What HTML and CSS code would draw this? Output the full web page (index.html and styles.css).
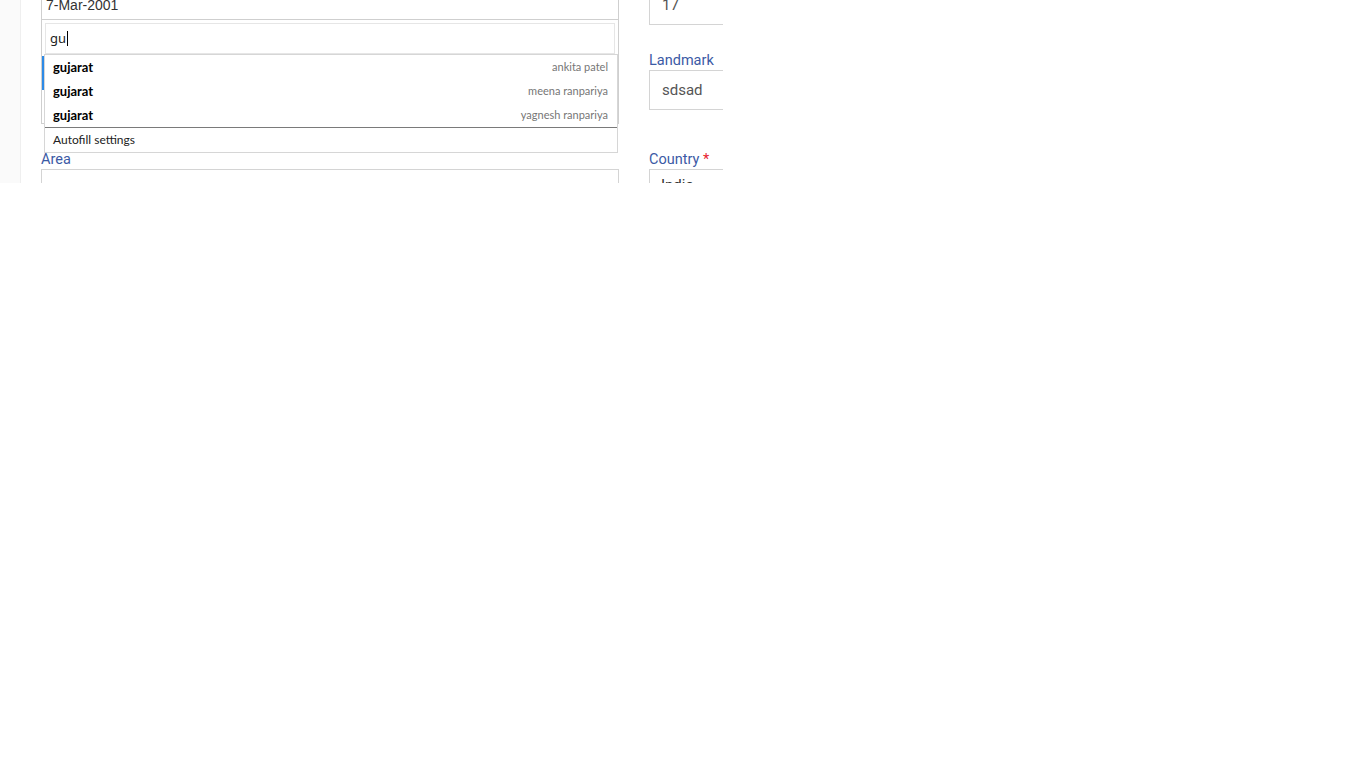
FILE: index.html
```html
<!DOCTYPE html>
<html lang="en">
<head>
    <meta charset="UTF-8">
    <meta name="viewport" content="width=device-width, initial-scale=1.0">
    <title>Address Details</title>
    <link rel="stylesheet" href="styles.css">
</head>
<body>

    <div class="viewport">
        <aside class="sidebar"></aside>

        <main class="content">
            <form class="profile-form" autocomplete="on">

                <!-- Date of birth (dropdown open) -->
                <div class="field">
                    <label class="field-label">Date of Birth</label>
                    <div class="select-wrap">
                        <div class="select-box dob">7-Mar-2001</div>

                        <div class="select-dropdown">
                            <div class="select-search">gu<span class="caret"></span></div>
                        </div>

                        <span class="focus-bar left"></span>
                        <span class="focus-bar right"></span>

                        <!-- browser autofill suggestions -->
                        <div class="autofill-popup">
                            <div class="autofill-item">
                                <span class="autofill-value">gujarat</span>
                                <span class="autofill-label">ankita patel</span>
                            </div>
                            <div class="autofill-item">
                                <span class="autofill-value">gujarat</span>
                                <span class="autofill-label">meena ranpariya</span>
                            </div>
                            <div class="autofill-item">
                                <span class="autofill-value">gujarat</span>
                                <span class="autofill-label">yagnesh ranpariya</span>
                            </div>
                            <div class="autofill-settings">Autofill settings</div>
                        </div>
                    </div>
                </div>

                <div class="field">
                    <label class="field-label">House No</label>
                    <input class="text-input" type="text" value="17">
                </div>

                <div class="field">
                    <label class="field-label">State</label>
                    <div class="select-box"></div>
                </div>

                <div class="field with-hint">
                    <label class="field-label">Landmark</label>
                    <input class="text-input" type="text" value="sdsad">
                </div>

                <div class="field">
                    <label class="field-label">Area</label>
                    <input class="text-input" type="text" value="">
                </div>

                <div class="field">
                    <label class="field-label">Country <span class="required">*</span></label>
                    <div class="select-box country">India</div>
                </div>

            </form>
        </main>
    </div>

</body>
</html>
```

FILE: styles.css
```css
body {
    margin: 0;
    background: #fff;
    font-family: Roboto, Arial, sans-serif;
}
.viewport {
    width: 723px;
    height: 183px;
    overflow: hidden;
    display: flex;
}
.sidebar {
    flex: 0 0 20px;
    background-color: #fafafa;
    border-right: 1px solid #efefef;
}
.content {
    flex: 1;
    padding-left: 20px;
}
.profile-form {
    display: grid;
    grid-template-columns: 578px 578px;
    column-gap: 30px;
    row-gap: 24px;
    align-items: start;
    margin-top: -36px;
}
.field {
    display: flex;
    flex-direction: column;
}
.field.with-hint {
    padding-bottom: 14px;
}
.field-label {
    display: block;
    font-size: 14.5px;
    line-height: 20px;
    padding-top: 2px;
    margin-bottom: -1px;
    color: #3b5aa5;
}
.required {
    color: #e8222e;
}
.text-input {
    box-sizing: border-box;
    height: 40px;
    margin: 0;
    padding: 0 12px;
    border: 1px solid #d4d4d4;
    border-radius: 0;
    font-family: Roboto, Arial, sans-serif;
    font-size: 15px;
    color: #555;
    background: #fff;
    outline: none;
}
.select-box {
    box-sizing: border-box;
    height: 40px;
    border: 1px solid #d4d4d4;
    background: #fff;
}
.select-box.dob {
    height: 35px;
    padding: 11px 0 0 4px;
    font-family: "Liberation Sans", Arial, sans-serif;
    font-size: 14px;
    line-height: 16px;
    color: #333;
    border-color: #cfcfcf;
}
.select-box.country {
    padding: 6px 0 0 11px;
    font-size: 15px;
    line-height: 18px;
    color: #333;
}
.select-wrap {
    position: relative;
}

/* open dropdown under the date box */
.select-dropdown {
    position: absolute;
    top: 35px;
    left: 0;
    box-sizing: border-box;
    width: 578px;
    height: 104px;
    padding: 3px 3px 0 3px;
    border: 1px solid #cfcfcf;
    border-top: none;
    background: #fff;
}
.select-search {
    box-sizing: border-box;
    height: 31px;
    padding: 0 0 0 4px;
    border: 1px solid #e6e6e6;
    font-family: "Noto Sans", "Open Sans", sans-serif;
    font-size: 13px;
    line-height: 28px;
    color: #222;
}
.caret {
    display: inline-block;
    width: 1px;
    height: 15px;
    margin-left: 1px;
    vertical-align: -3px;
    background: #000;
}
.focus-bar {
    position: absolute;
    top: 71px;
    width: 2px;
    height: 34px;
    background: #2d8ae6;
}
.focus-bar.left {
    left: 1px;
}
.focus-bar.right {
    left: 575px;
    width: 1px;
    background: #6a9fd6;
}

/* browser autofill popup */
.autofill-popup {
    position: absolute;
    top: 69px;
    left: 3px;
    box-sizing: border-box;
    width: 574px;
    border: 1px solid #d6d6d6;
    background: #fff;
    font-family: Lato, "Noto Sans", sans-serif;
}
.autofill-item {
    display: flex;
    justify-content: space-between;
    align-items: center;
    height: 24px;
    padding: 0 9px 1px 8px;
    box-sizing: border-box;
}
.autofill-value {
    font-size: 13px;
    font-weight: bold;
    color: #000;
}
.autofill-label {
    font-size: 11px;
    color: #767676;
}
.autofill-settings {
    height: 24px;
    padding-left: 8px;
    border-top: 1px solid #7a7a7a;
    font-size: 12px;
    line-height: 23px;
    color: #222;
}
```
